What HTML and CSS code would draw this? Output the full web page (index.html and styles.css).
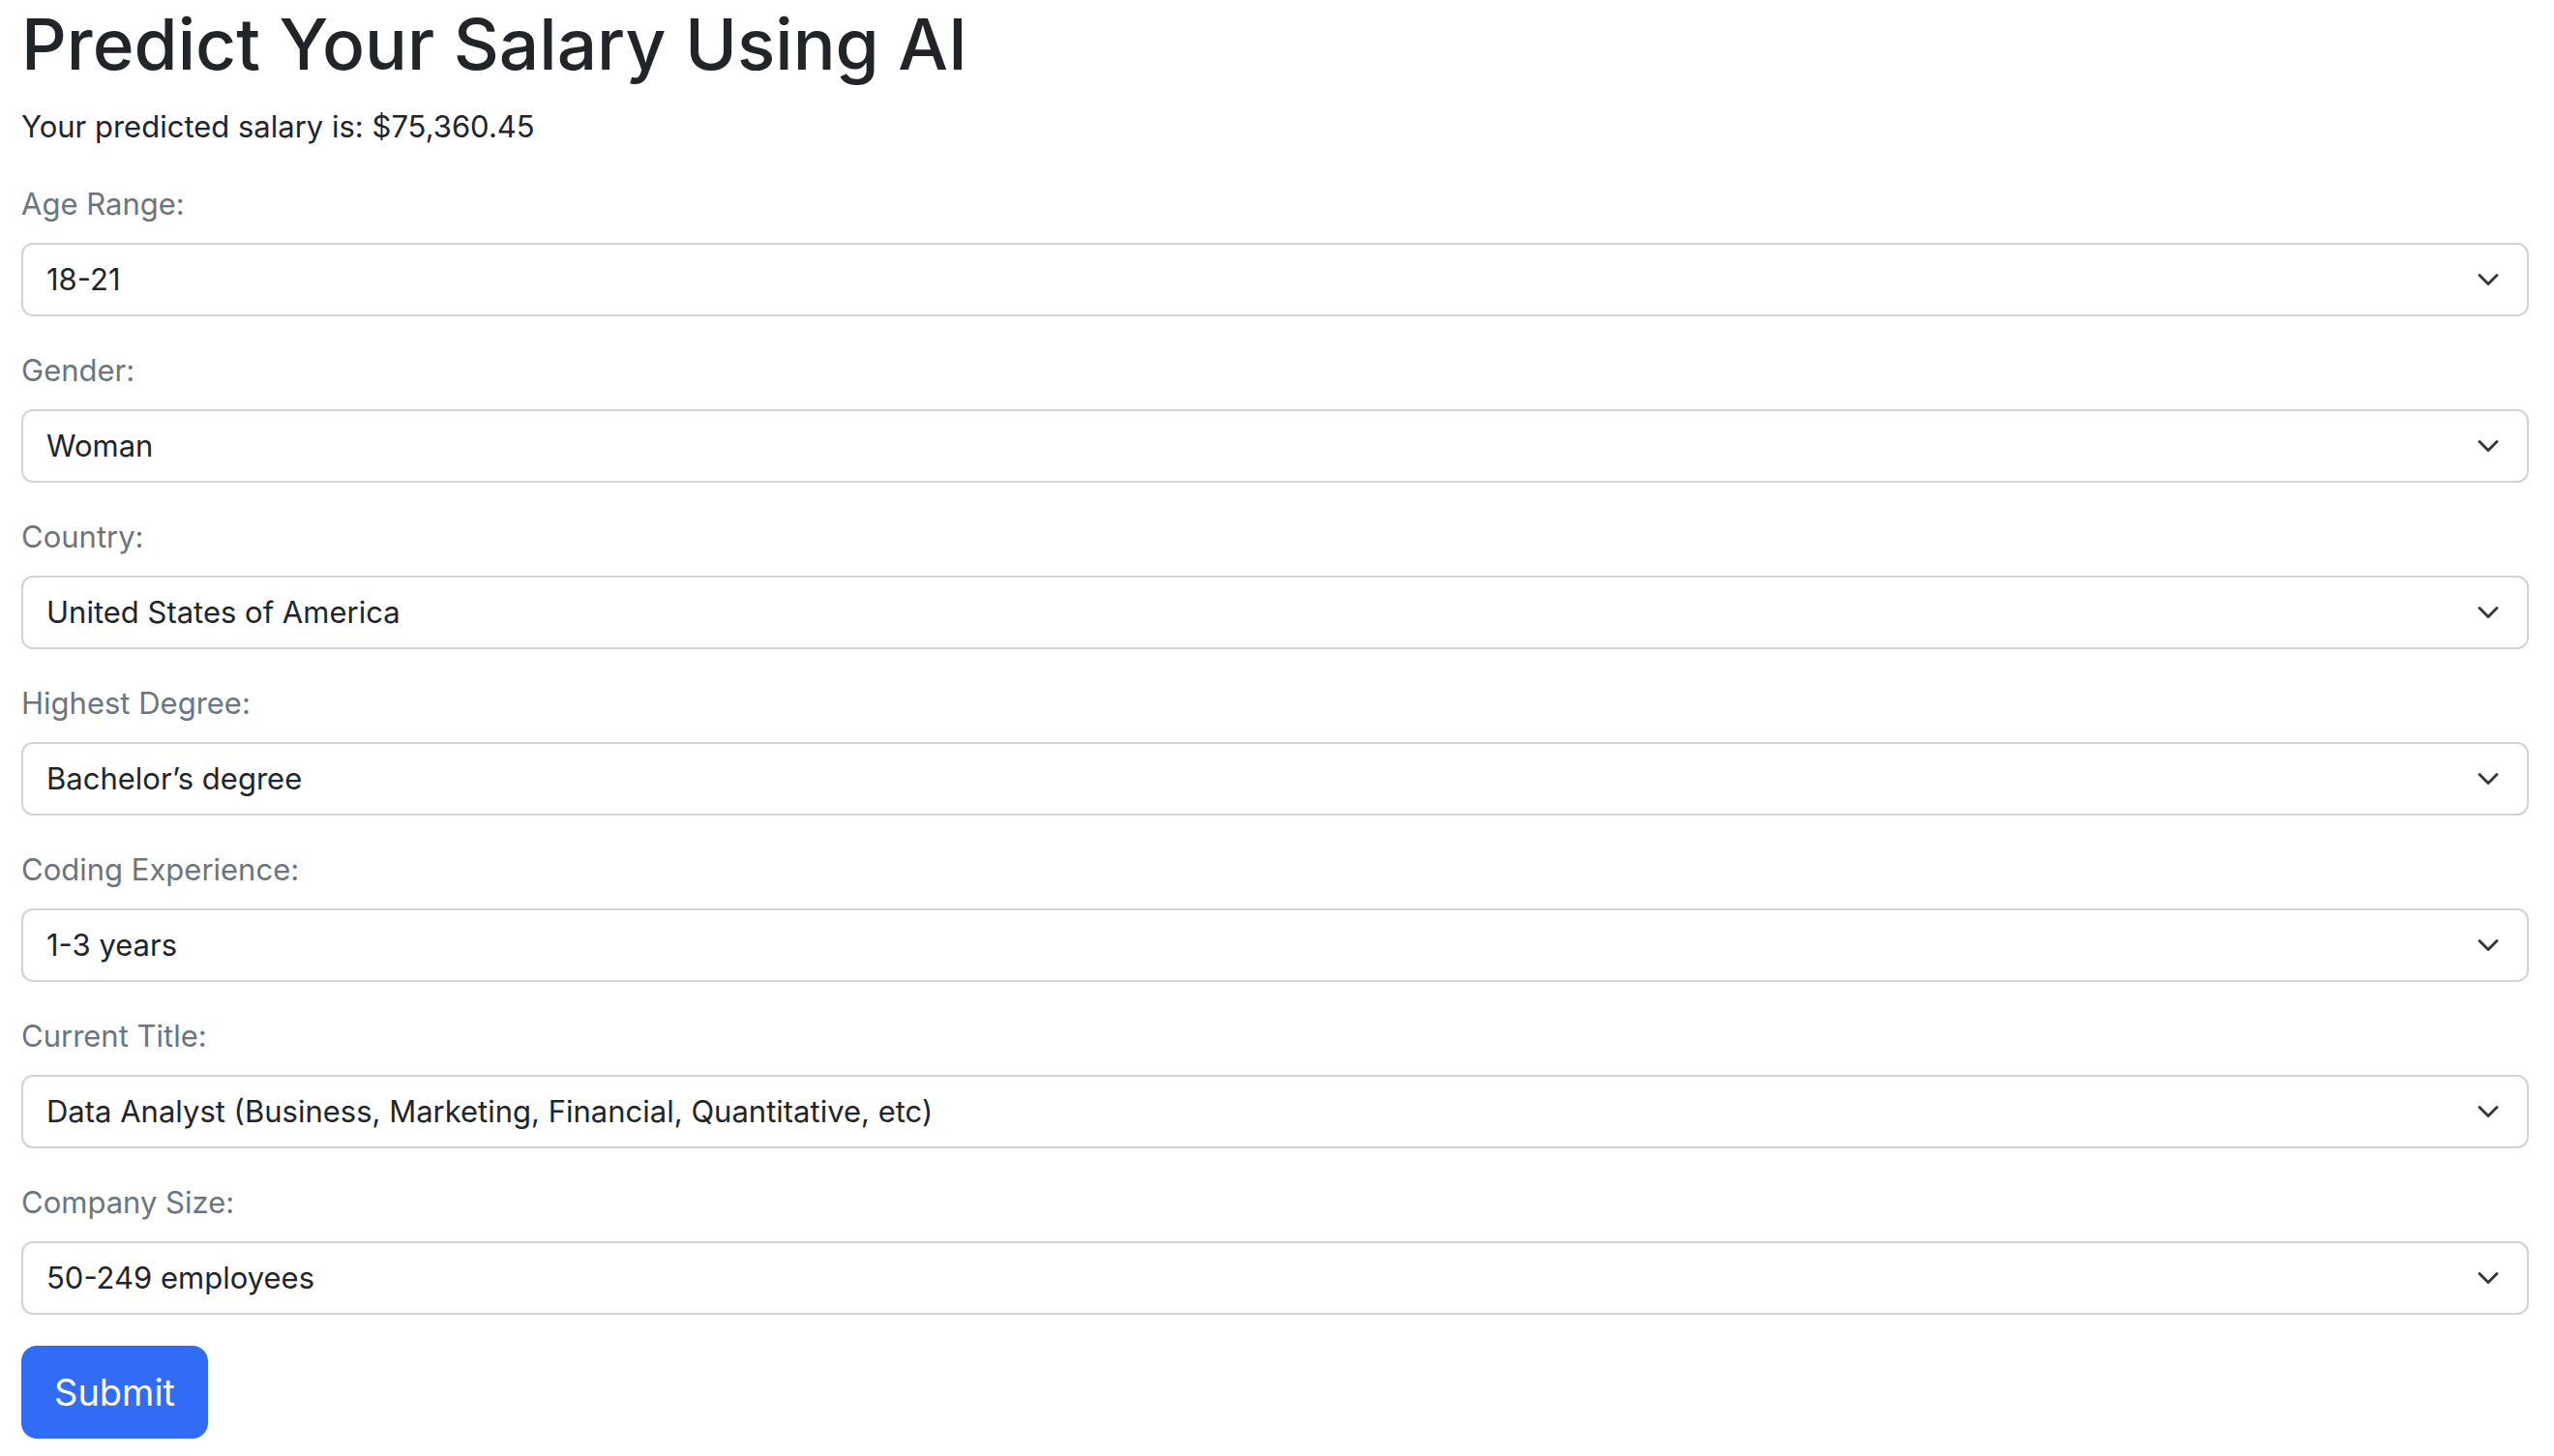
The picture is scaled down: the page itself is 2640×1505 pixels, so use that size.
FILE: index.html
```html
<!DOCTYPE html>
<html lang="en">
<head>
  <meta charset="utf-8">
  <meta name="viewport" content="width=device-width, initial-scale=1">
  <title>Predict Your Salary Using AI</title>
  <link rel="stylesheet" href="styles.css">
</head>
<body>
  <main class="page">
    <h1 class="title">Predict Your Salary Using AI</h1>
    <p class="result">Your predicted salary is: $75,360.45</p>
    <form class="form">
      <div class="field">
        <label class="label" for="age">Age Range:</label>
        <select class="select" id="age"><option>18-21</option></select>
      </div>
      <div class="field">
        <label class="label" for="gender">Gender:</label>
        <select class="select" id="gender"><option>Woman</option></select>
      </div>
      <div class="field">
        <label class="label" for="country">Country:</label>
        <select class="select" id="country"><option>United States of America</option></select>
      </div>
      <div class="field">
        <label class="label" for="degree">Highest Degree:</label>
        <select class="select" id="degree"><option>Bachelor’s degree</option></select>
      </div>
      <div class="field">
        <label class="label" for="experience">Coding Experience:</label>
        <select class="select" id="experience"><option>1-3 years</option></select>
      </div>
      <div class="field">
        <label class="label" for="job">Current Title:</label>
        <select class="select" id="job"><option>Data Analyst (Business, Marketing, Financial, Quantitative, etc)</option></select>
      </div>
      <div class="field">
        <label class="label" for="company">Company Size:</label>
        <select class="select" id="company"><option>50-249 employees</option></select>
      </div>
      <button class="submit" type="button">Submit</button>
    </form>
  </main>
</body>
</html>
```
FILE: styles.css
```css
*,
*::before,
*::after {
  box-sizing: border-box;
}

body {
  margin: 0;
  background: #fff;
  color: #212529;
  font-family: Inter, "Liberation Sans", sans-serif;
  font-size: 31px;
  line-height: 48px;
}

.page {
  padding: 0 26px 16px 22px;
}

.title {
  margin: 0 0 15px;
  font-size: 73px;
  font-weight: 500;
  line-height: 92px;
}

.result {
  margin: 0 0 32px;
}

.form {
  display: flex;
  flex-direction: column;
  align-items: flex-start;
  gap: 32px;
}

.field {
  display: flex;
  flex-direction: column;
  gap: 16px;
  width: 100%;
}

.label {
  color: #6c757d;
}

.select {
  appearance: none;
  width: 100%;
  height: 76px;
  margin: 0;
  padding: 12px 72px 12px 24px;
  border: 2px solid #ced4da;
  border-radius: 12px;
  background: #fff url("data:image/svg+xml,%3Csvg xmlns='http://www.w3.org/2000/svg' viewBox='0 0 16 16'%3E%3Cpath fill='none' stroke='%23343a40' stroke-linecap='round' stroke-linejoin='round' stroke-width='2' d='m2 5 6 6 6-6'/%3E%3C/svg%3E") no-repeat right 24px center / 32px 24px;
  color: inherit;
  font: inherit;
}

.submit {
  padding: 16px 32px;
  border: 2px solid #306cf5;
  border-radius: 16px;
  background: #306cf5;
  color: #fff;
  font-family: inherit;
  font-size: 38px;
  line-height: 60px;
}
```
